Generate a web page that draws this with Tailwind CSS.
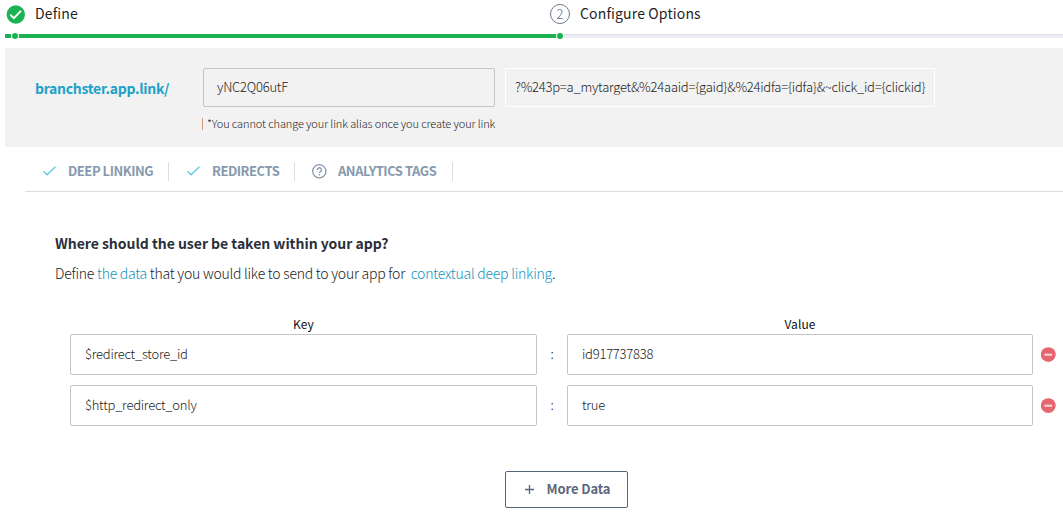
<!DOCTYPE html>
<html lang="en">
<head>
<meta charset="utf-8">
<title>Configure Options</title>
<script src="https://cdn.jsdelivr.net/npm/@tailwindcss/browser@4"></script>
</head>
<body class="w-[1063px] h-[518px] overflow-hidden bg-white text-[#222] text-[14px] whitespace-nowrap font-['Noto_Sans_CJK_SC',sans-serif] font-light">
<header class="pl-[5px]">
  <div class="flex h-[27px] items-center font-normal text-[14px] text-[#1f1f1f] tracking-[0.14px]">
    <div class="flex items-center w-[545px]">
      <svg class="ml-px mr-[10px] mt-px" width="19" height="19" viewBox="0 0 19 19"><circle cx="9.8" cy="9.5" r="9.2" fill="#1bb352"/><path d="M4.3 9.6l3.6 3.5 7-7.2" fill="none" stroke="#fff" stroke-width="1.9"/></svg>
      <span>Define</span>
    </div>
    <span class="flex items-center justify-center w-5 h-5 mr-[10px] rounded-full border border-[#72778d] text-[#72778d] text-[13px] font-light">2</span>
    <span>Configure Options</span>
  </div>
  <svg class="block mt-[4px]" width="1058" height="10" viewBox="0 0 1058 10"><rect y="3" width="1058" height="4" fill="#ebedf2"/><rect y="3" width="1058" height="1" fill="#dcdfe6"/><rect y="3" width="555" height="4" fill="#1bb352"/><circle cx="10" cy="5" r="4" fill="#fff"/><circle cx="10" cy="5" r="3" fill="#1bb352"/><circle cx="555" cy="5" r="4" fill="#fff"/><circle cx="555" cy="5" r="3" fill="#1bb352"/></svg>
</header>
<section class="ml-[5px] mt-[7px] h-[99px] bg-[#f2f2f2] pl-[30px] pt-5 flex items-start">
  <a class="w-[168px] leading-[40px] font-bold tracking-[-0.3px] text-[#1ca1c7]">branchster.app.link/</a>
  <div class="w-[292px] mr-[10px]">
    <div class="h-[39px] border border-[#c4c4c4] rounded-[2px] pl-[13px] leading-[36px] text-[13px] tracking-[-0.23px]">yNC2Q06utF</div>
    <div class="flex items-center h-[12px] mt-[11px] text-[11px] tracking-[-0.11px]"><i class="shrink-0 w-px h-3 bg-[#d09a78] -ml-px mr-[4px]"></i><span class="-mt-[2px]">*You cannot change your link alias once you create your link</span></div>
  </div>
  <div class="w-[430px] h-[39px] border border-white pl-[9px] leading-[36px] text-[13px] tracking-[-0.23px]">?%243p=a_mytarget&amp;%24aaid={gaid}&amp;%24idfa={idfa}&amp;~click_id={clickid}</div>
</section>
<nav class="ml-[25px] h-[45px] border-b border-[#d8dee6] flex items-center pt-[4px] text-[13px] tracking-[-0.46px] font-bold text-[#8799ae]">
  <div class="flex items-center w-[144px] h-[19px] border-r border-[#d8dee6] pl-[18px]"><svg class="mr-[12px]" width="13" height="10" viewBox="0 0 13 10"><path d="M.5 5.2l3.6 3.6L12.4.8" fill="none" stroke="#62cbe4" stroke-width="1.3"/></svg><span>DEEP LINKING</span></div>
  <div class="flex items-center w-[126px] h-[19px] border-r border-[#d8dee6] pl-[18px]"><svg class="mr-[12px]" width="13" height="10" viewBox="0 0 13 10"><path d="M.5 5.2l3.6 3.6L12.4.8" fill="none" stroke="#62cbe4" stroke-width="1.3"/></svg><span>REDIRECTS</span></div>
  <div class="flex items-center w-[158px] h-[19px] border-r border-[#d8dee6] pl-[17px]"><svg class="mr-[11px]" width="15" height="15" viewBox="0 0 15 15" fill="none" stroke="#8799ae" stroke-width="1.3"><circle cx="7.3" cy="7.3" r="6.6"/><path d="M5.3 5.9a2.1 2.1 0 1 1 3.1 1.8c-.7.4-1 .7-1 1.4M7.4 10.1v1.3"/></svg><span>ANALYTICS TAGS</span></div>
</nav>
<main class="pl-[55px] pt-[41px]">
  <h2 class="h-5 leading-5 font-bold tracking-[-0.03px] text-[#2b2f3a]">Where should the user be taken within your app?</h2>
  <p class="h-5 leading-5 mt-[10px] tracking-[-0.24px]">Define <a class="text-[#1593bb]">the data</a> that you would like to send to your app for &nbsp;<a class="text-[#1593bb]">contextual deep linking</a>.</p>
  <div class="pl-[15px] mt-[31px] flex h-5 leading-5 text-[12px] text-center font-normal text-[#111] tracking-[0.1px]">
    <div class="w-[467px]">Key</div><div class="w-[466px] ml-[30px]">Value</div>
  </div>
  <div class="pl-[15px] flex flex-col gap-[10px] leading-[38px] text-[13px] tracking-[-0.24px]">
    <div class="flex items-center h-[41px]">
      <div class="w-[467px] h-[41px] border border-[#c4c4c4] rounded-[2px] pl-[14px]">$redirect_store_id</div>
      <div class="w-[30px] text-center -mt-px">:</div>
      <div class="w-[466px] h-[41px] border border-[#c4c4c4] rounded-[2px] pl-[14px]">id917737838</div>
      <svg class="ml-[8px]" width="15" height="15"><circle cx="7.3" cy="7.6" r="7.4" fill="#e5666e"/><rect x="3.5" y="6.7" width="7.6" height="2" fill="#f8dcdd"/></svg>
    </div>
    <div class="flex items-center h-[41px]">
      <div class="w-[467px] h-[41px] border border-[#c4c4c4] rounded-[2px] pl-[14px]">$http_redirect_only</div>
      <div class="w-[30px] text-center -mt-px">:</div>
      <div class="w-[466px] h-[41px] border border-[#c4c4c4] rounded-[2px] pl-[14px]">true</div>
      <svg class="ml-[8px]" width="15" height="15"><circle cx="7.3" cy="7.6" r="7.4" fill="#e5666e"/><rect x="3.5" y="6.7" width="7.6" height="2" fill="#f8dcdd"/></svg>
    </div>
  </div>
  <button class="flex items-center w-[123px] h-[37px] ml-[450px] mt-[45px] border border-[#54657e] rounded-[2px] pl-[19px] pb-px text-[13px] tracking-[-0.1px] font-bold text-[#5c6779]"><svg class="mr-[12.5px]" width="9" height="9"><path d="M0 4.5h9M4.5 0v9" stroke="#54657e" stroke-width="1.3"/></svg><span>More Data</span></button>
</main>
</body>
</html>
